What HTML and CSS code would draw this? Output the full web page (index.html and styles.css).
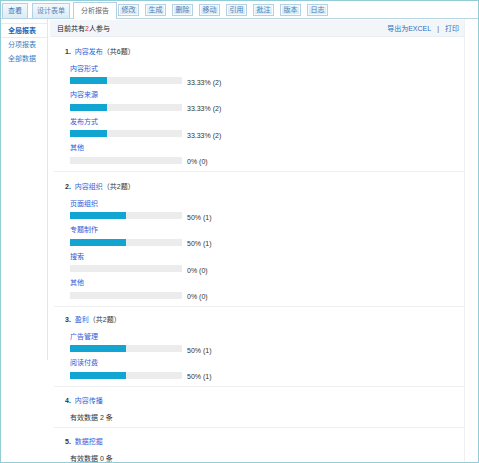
FILE: index.html
```html
<!DOCTYPE html>
<html lang="zh-CN">
<head>
<meta charset="utf-8">
<title>分析报告</title>
<link rel="stylesheet" href="styles.css">
</head>
<body>
<div class="frame">
  <div class="tabbar">
    <span class="tab t1">查看</span>
    <span class="tab t2">设计表单</span>
    <span class="tab active">分析报告</span>
    <span class="btn">修改</span>
    <span class="btn">生成</span>
    <span class="btn">删除</span>
    <span class="btn">移动</span>
    <span class="btn">引用</span>
    <span class="btn">批注</span>
    <span class="btn">版本</span>
    <span class="btn">日志</span>
  </div>
  <div class="body">
    <aside class="side">
      <div class="side-item current">全局报表</div>
      <div class="side-item">分项报表</div>
      <div class="side-item">全部数据</div>
    </aside>
    <main class="main">
      <div class="head">
        <span class="count">目前共有<em>2</em>人参与</span>
        <span class="tools"><a>导出为EXCEL</a><span class="sep">|</span><a>打印</a></span>
      </div>

      <section class="sec">
        <div class="title"><b>1.</b><a>内容发布</a><span class="total">（共6题）</span></div>
        <div class="item"><div class="label">内容形式</div><div class="row"><div class="track"><div class="fill" style="width:33.33%"></div></div><span class="pct">33.33% (2)</span></div></div>
        <div class="item"><div class="label">内容来源</div><div class="row"><div class="track"><div class="fill" style="width:33.33%"></div></div><span class="pct">33.33% (2)</span></div></div>
        <div class="item"><div class="label">发布方式</div><div class="row"><div class="track"><div class="fill" style="width:33.33%"></div></div><span class="pct">33.33% (2)</span></div></div>
        <div class="item"><div class="label">其他</div><div class="row"><div class="track"><div class="fill" style="width:0%"></div></div><span class="pct">0% (0)</span></div></div>
      </section>

      <section class="sec">
        <div class="title"><b>2.</b><a>内容组织</a><span class="total">（共2题）</span></div>
        <div class="item"><div class="label">页面组织</div><div class="row"><div class="track"><div class="fill" style="width:50%"></div></div><span class="pct">50% (1)</span></div></div>
        <div class="item"><div class="label">专题制作</div><div class="row"><div class="track"><div class="fill" style="width:50%"></div></div><span class="pct">50% (1)</span></div></div>
        <div class="item"><div class="label">搜索</div><div class="row"><div class="track"><div class="fill" style="width:0%"></div></div><span class="pct">0% (0)</span></div></div>
        <div class="item"><div class="label">其他</div><div class="row"><div class="track"><div class="fill" style="width:0%"></div></div><span class="pct">0% (0)</span></div></div>
      </section>

      <section class="sec short">
        <div class="title"><b>3.</b><a>盈利</a><span class="total">（共2题）</span></div>
        <div class="item"><div class="label">广告管理</div><div class="row"><div class="track"><div class="fill" style="width:50%"></div></div><span class="pct">50% (1)</span></div></div>
        <div class="item"><div class="label">阅读付费</div><div class="row"><div class="track"><div class="fill" style="width:50%"></div></div><span class="pct">50% (1)</span></div></div>
      </section>

      <section class="sec text">
        <div class="title"><b>4.</b><a>内容传播</a></div>
        <div class="valid">有效数据 2 条</div>
      </section>

      <section class="sec text">
        <div class="title"><b>5.</b><a>数据挖掘</a></div>
        <div class="valid">有效数据 0 条</div>
      </section>
    </main>
  </div>
</div>
</body>
</html>
```

FILE: styles.css
```css
* { box-sizing: border-box; }
html, body { margin: 0; padding: 0; background: #fff; }
body {
  font-family: "Liberation Sans", "Noto Sans CJK SC", sans-serif;
  font-size: 7px;
  color: #333;
}
a { color: #2f5fd6; text-decoration: none; }

.frame {
  width: 479px;
  height: 463px;
  border: 1px solid #92ccd6;
  overflow: hidden;
  position: relative;
}

/* tabs */
.tabbar {
  height: 18px;
  display: flex;
  align-items: flex-end;
  padding-left: 1px;
  border-bottom: 1px solid #b9d5e4;
}
.tab {
  height: 15px;
  line-height: 14px;
  margin-right: 4px;
  text-align: center;
  color: #3d75b8;
  background: linear-gradient(#f3f9fc, #dcebf4);
  border: 1px solid #b3d1e3;
  border-bottom: none;
}
.t1 { width: 26px; }
.t2 { width: 38px; margin-right: 3px; color: #5585ba; }
.tab.active {
  width: 44px;
  height: 17px;
  line-height: 16px;
  margin-bottom: -1px;
  margin-right: 1px;
  background: #fff;
  color: #666;
}
.btn {
  align-self: flex-start;
  margin-top: 3px;
  width: 21px;
  height: 12px;
  line-height: 10px;
  margin-right: 6px;
  text-align: center;
  color: #4d7fb8;
  background: linear-gradient(#eaf4fa, #d6e8f3);
  border: 1px solid #b5d2e4;
  box-shadow: inset 0 0 0 1px #f6fbfe;
}

/* body */
.body { display: flex; align-items: flex-start; }
.side {
  width: 47px;
  height: 341px;
  border-right: 1px solid #e3e7eb;
  padding-top: 4px;
}
.side-item {
  height: 14px;
  line-height: 14px;
  padding-left: 7px;
  color: #3a7cc2;
}
.side-item.current {
  font-weight: bold;
  color: #2266b8;
  border-top: 1px solid #e6edf2;
  border-bottom: 1px solid #e6edf2;
  height: 15px;
  margin-bottom: 0;
}

.main {
  width: 415px;
  margin-left: 2px;
  border-right: 1px solid #eef0f2;
  min-height: 443px;
}
.head {
  margin-top: 1px;
  height: 17px;
  line-height: 17px;
  padding: 0 5px 0 7px;
  background: #f3f6f9;
  border-bottom: 1px solid #e9eef2;
  display: flex;
  justify-content: space-between;
}
.count { color: #222; }
.count em { font-style: normal; color: #e2302a; }
.tools a { color: #2a6fc0; }
.sep { margin: 0 6px; color: #555; }

.sec {
  margin: 0 0 0 4px;
  padding: 8px 0 3.5px 11px;
  border-bottom: 1px solid #eef0f2;
}
.sec.short { padding-top: 6px; padding-bottom: 3px; }
.title {
  height: 13px;
  line-height: 13px;
  margin-bottom: 3.5px;
  color: #333;
}
.title b { font-weight: bold; margin-right: 4px; color: #333; }
.title a { color: #2f5fd6; }
.total { color: #333; }

.item { padding-left: 5px; height: 26.5px; }
.label { height: 13px; line-height: 13px; color: #3058d8; }
.row {
  margin-top: 2.5px;
  height: 7px;
  display: flex;
  align-items: center;
}
.track {
  width: 112px;
  height: 7px;
  background: #ececec;
}
.fill { height: 7px; background: #12a5d2; }
.pct { margin-left: 5px; margin-top: 3px; line-height: 7px; color: #333; }

.sec.text { padding-top: 7px; padding-bottom: 2.5px; }
.sec.text .title { margin-bottom: 4.5px; }
.valid { padding-left: 5px; height: 13px; line-height: 13px; color: #333; }
.sec:last-child { border-bottom: none; }
```
